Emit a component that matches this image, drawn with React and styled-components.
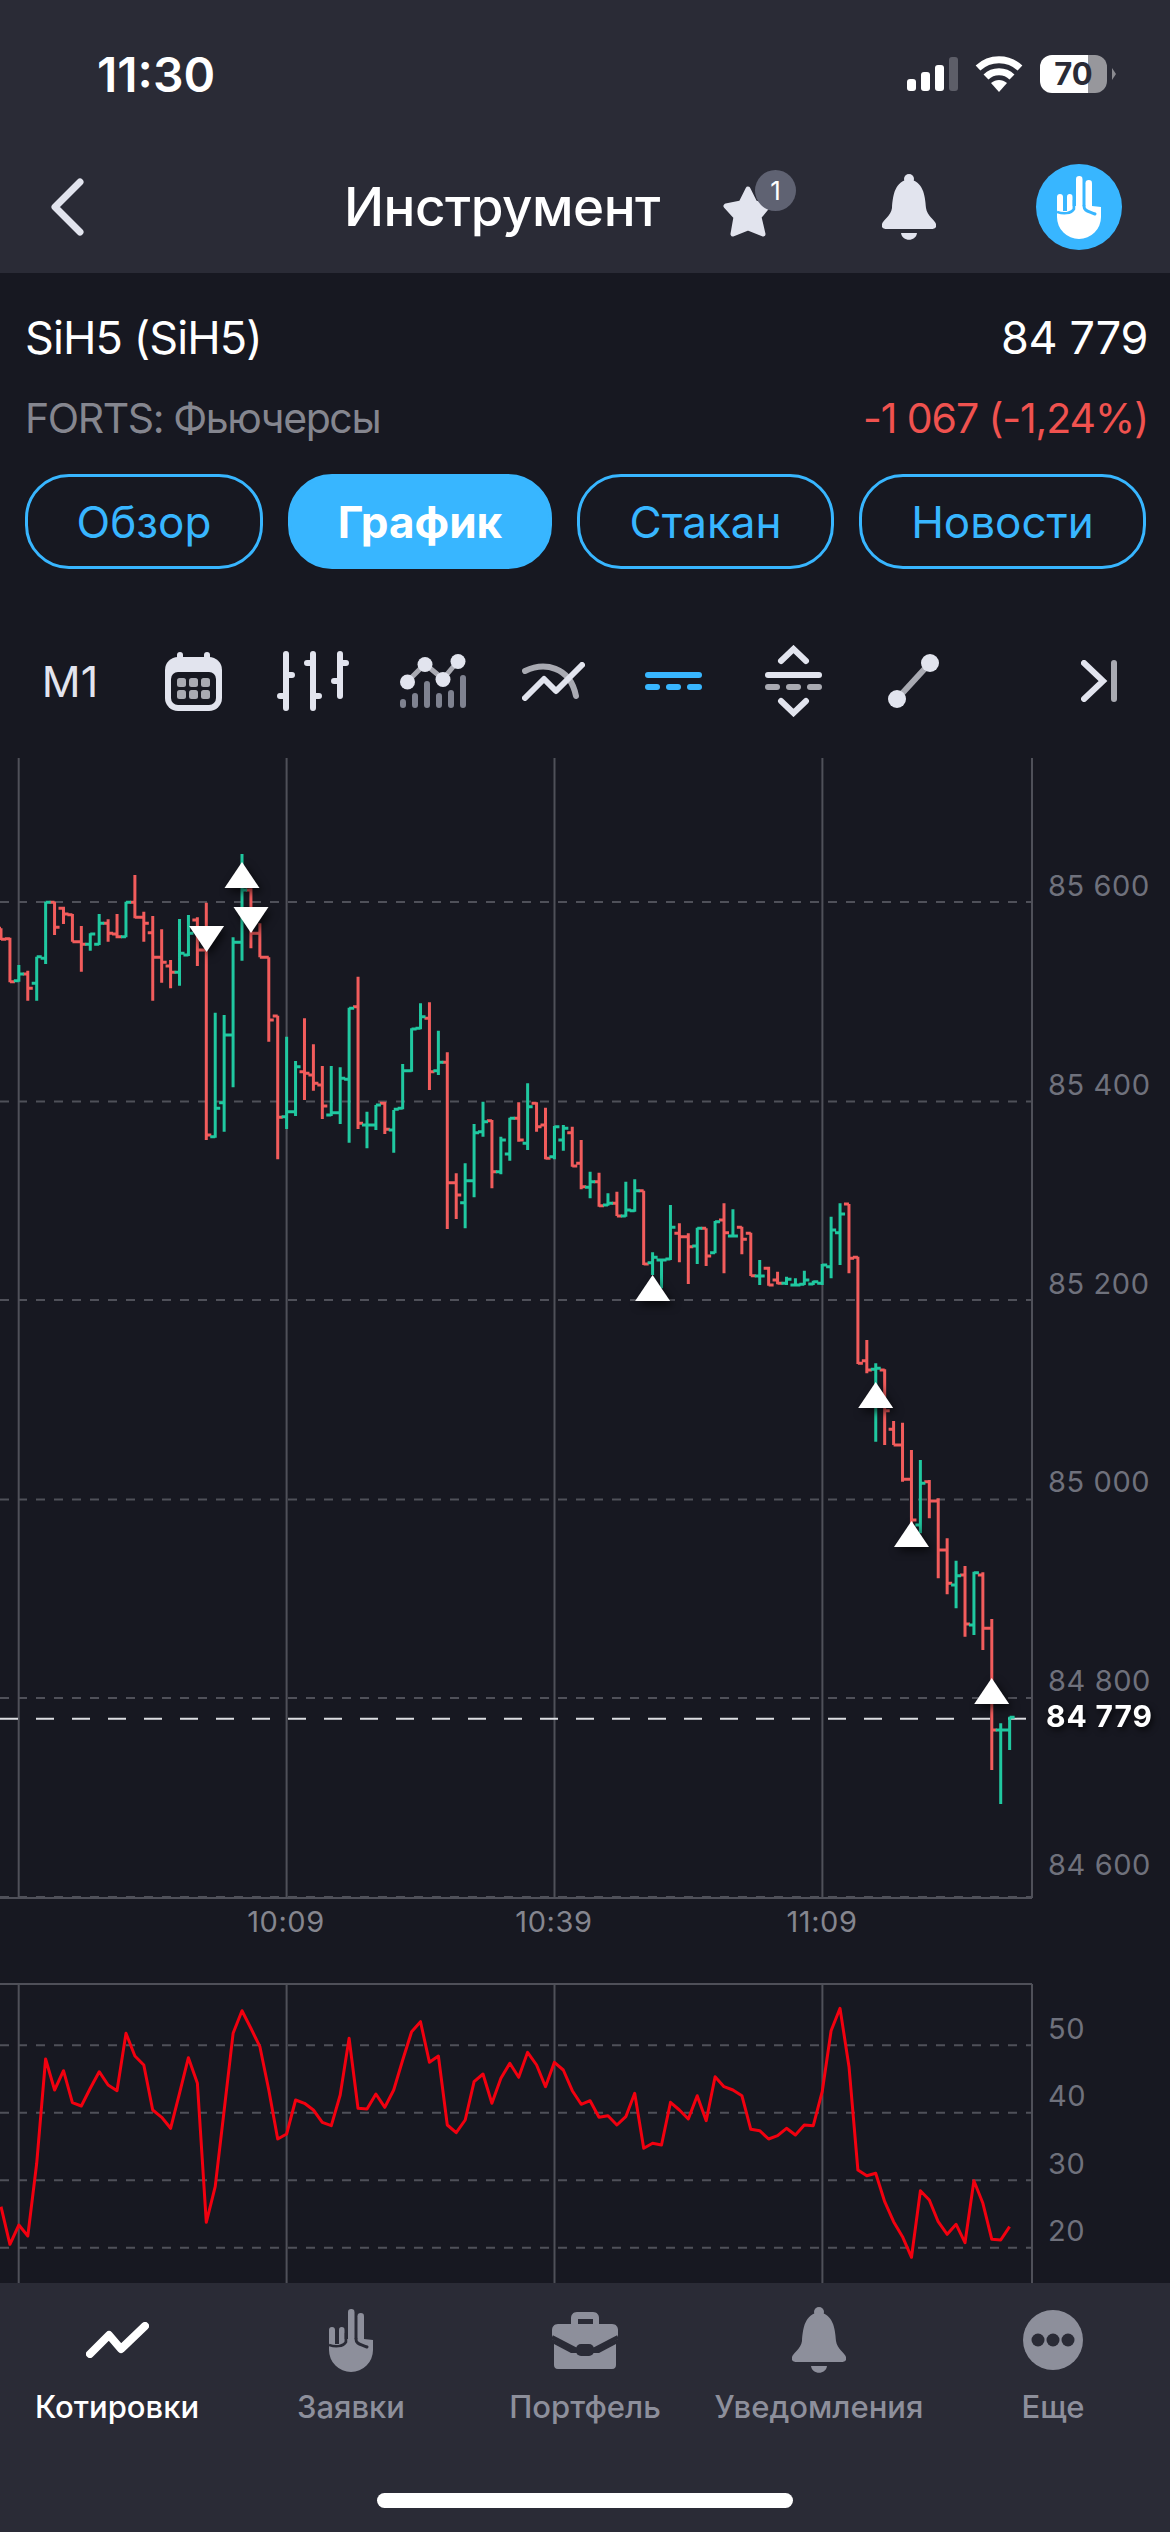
import styled, { createGlobalStyle } from "styled-components";

const colors = {
  header: "#2a2b36",
  body: "#171821",
  blue: "#38b6ff",
  icon: "#e2e4ee",
  iconDim: "#a9aab2",
  tabIcon: "#8d8f9b",
  red: "#f25c5c",
  green: "#20c8a0",
  grid: "#4f5059",
  axis: "#6f717c",
};

const GlobalStyle = createGlobalStyle`
  html, body {
    margin: 0;
    padding: 0;
    background: ${colors.body};
  }
  body {
    font-family: Inter, "Noto Sans", "Liberation Sans", sans-serif;
    color: white;
  }
`;

const Page = styled.div`
  width: 1170px;
  height: 2532px;
  display: flex;
  flex-direction: column;
  overflow: hidden;
`;

const Header = styled.header`
  height: 273px;
  flex: none;
  background: ${colors.header};
`;

const StatusBar = styled.div`
  height: 148px;
  padding: 0 54px 0 97px;
  box-sizing: border-box;
  display: flex;
  justify-content: space-between;
  align-items: center;
`;

const Time = styled.div`
  font-size: 48px;
  font-weight: 600;
`;

const StatusIcons = styled.div`
  display: flex;
  align-items: center;
  gap: 17px;
`;

const BatteryWrap = styled.div`
  display: flex;
  align-items: center;
  gap: 5px;
`;

const Battery = styled.div`
  width: 67px;
  height: 38px;
  border-radius: 12px;
  background: linear-gradient(to right, #fff 72%, #97979c 72%);
  color: ${colors.header};
  font-size: 31px;
  font-weight: 700;
  line-height: 38px;
  text-align: center;
`;

const BatteryCap = styled.div`
  width: 4px;
  height: 12px;
  background: #8a8a90;
  clip-path: polygon(0 0, 100% 50%, 0 100%);
`;

const NavBar = styled.div`
  height: 118px;
  padding: 0 48px 0 51px;
  display: flex;
  align-items: center;
`;

const Title = styled.h1`
  flex: 1;
  margin: 0 0 0 260px;
  font-size: 53px;
  font-weight: 500;
  letter-spacing: -0.5px;
  white-space: nowrap;
`;

const StarWrap = styled.div`
  position: relative;
  width: 50px;
  height: 53px;
  margin-top: 8px;
`;

const Badge = styled.div`
  position: absolute;
  left: 34px;
  top: -15px;
  width: 41px;
  height: 41px;
  border-radius: 50%;
  background: #5f6272;
  font-size: 26px;
  line-height: 41px;
  text-align: center;
`;

const NavBell = styled.div`
  display: flex;
  margin-left: 111px;
`;

const Avatar = styled.div`
  width: 86px;
  height: 86px;
  margin-left: 100px;
  border-radius: 50%;
  background: ${colors.blue};
  display: flex;
  align-items: center;
  justify-content: center;
`;

const Main = styled.main`
  flex: 1;
  min-height: 0;
  display: flex;
  flex-direction: column;
`;

const QuoteRow = styled.div`
  display: flex;
  justify-content: space-between;
  height: 50px;
  line-height: 50px;
  margin: ${(p) => p.$top}px 22px 0 25px;
  font-size: ${(p) => p.$size}px;
`;

const SymbolName = styled.span`
  letter-spacing: -0.9px;
`;

const LastQuote = styled.span`
  letter-spacing: -0.3px;
`;

const Muted = styled.span`
  color: #85868f;
  letter-spacing: -1.4px;
`;

const Loss = styled.span`
  color: #f0524f;
  letter-spacing: -1.1px;
`;

const Tabs = styled.div`
  display: grid;
  grid-template-columns: 238px 264px 257px 287px;
  gap: 25px;
  margin: 31px 25px 0;
`;

const Tab = styled.button`
  height: 95px;
  padding: 0;
  box-sizing: border-box;
  border: 3px solid ${colors.blue};
  border-radius: 44px;
  background: ${(p) => (p.$active ? colors.blue : "transparent")};
  color: ${(p) => (p.$active ? "#fff" : colors.blue)};
  font-family: inherit;
  font-size: 44px;
  font-weight: ${(p) => (p.$active ? 700 : 400)};
`;

const Toolbar = styled.div`
  height: 189px;
  padding: 35px 53px 0 13px;
  box-sizing: border-box;
  display: flex;
  align-items: center;
`;

const ToolCell = styled.div`
  width: 120px;
  display: flex;
  justify-content: center;
  align-items: center;
`;

const Period = styled.div`
  margin-right: 6px;
  font-size: 43px;
  color: ${colors.icon};
`;

const Collapse = styled.div`
  display: flex;
  margin-left: auto;
`;

const Chart = styled.svg`
  display: block;
  flex: none;
`;

const PriceText = styled.text`
  font-family: Inter, "Liberation Sans", sans-serif;
  font-size: 29px;
  letter-spacing: 0.6px;
  fill: ${colors.axis};
`;

const LastPrice = styled(PriceText)`
  font-size: 30px;
  font-weight: 700;
  letter-spacing: 0.9px;
  fill: #fff;
  filter: drop-shadow(2px 3px 3px rgba(0, 0, 0, 0.7));
`;

const TimeText = styled(PriceText)`
  fill: #85868f;
  text-anchor: middle;
`;

const Marker = styled.polygon`
  fill: #fff;
  filter: drop-shadow(3px 4px 4px rgba(0, 0, 0, 0.65));
`;

const Footer = styled.footer`
  height: 249px;
  flex: none;
  background: ${colors.header};
  position: relative;
  display: grid;
  grid-template-columns: repeat(5, 234px);
  align-content: start;
  padding-top: 24px;
  box-sizing: border-box;
`;

const TabItem = styled.div`
  display: flex;
  flex-direction: column;
  align-items: center;
  color: ${(p) => (p.$active ? "#fff" : colors.tabIcon)};
`;

const TabIcon = styled.div`
  height: 66px;
  display: flex;
  align-items: center;
`;

const TabLabel = styled.div`
  margin-top: 16px;
  font-size: 31px;
  font-weight: 500;
  line-height: 36px;
  white-space: nowrap;
`;

const HomeBar = styled.div`
  position: absolute;
  left: 377px;
  bottom: 24px;
  width: 416px;
  height: 15px;
  border-radius: 8px;
  background: #fff;
`;

// y readings taken per section of the chart: [green, high, low, open, close]
const section = (top, rows) =>
  rows.map(([g, h, l, o, c]) => ({
    up: g === 1,
    h: top + h / 3,
    l: top + l / 3,
    o: top + o / 3,
    c: top + c / 3,
  }));

const bars = [
  ...section(840, [
    [0, 265, 300, 265, 298], [0, 293, 427, 296, 425], [1, 375, 425, 422, 402], [0, 392, 482, 402, 445],
    [1, 350, 482, 430, 350], [1, 185, 372, 355, 187], [0, 185, 285, 187, 262], [0, 200, 252, 205, 222],
    [0, 222, 305, 224, 305], [0, 258, 395, 305, 313], [1, 280, 332, 313, 282], [1, 222, 315, 313, 250],
    [0, 238, 305, 250, 280], [0, 222, 295, 282, 290], [1, 185, 292, 290, 187], [0, 105, 235, 187, 232],
    [0, 215, 305, 232, 250], [0, 228, 482, 278, 352], [0, 268, 428, 352, 367], [0, 360, 445, 378, 397],
    [1, 237, 437, 397, 340], [1, 225, 348, 345, 280], [0, 232, 378, 240, 330], [0, 188, 900, 330, 885],
    [1, 518, 893, 890, 805], [1, 525, 875, 788, 585], [1, 292, 742, 585, 307], [1, 42, 362, 307, 150],
    [0, 145, 325, 150, 280], [0, 250, 352, 280, 352], [0, 352, 605, 352, 540], [0, 527, 958, 528, 832],
    [1, 590, 867, 830, 815], [1, 663, 828, 815, 680], [0, 535, 780, 695, 700], [0, 613, 752, 705, 730],
    [0, 678, 837, 735, 798], [1, 678, 828, 825, 818], [1, 682, 852, 818, 715], [1, 503, 908, 718, 505],
    [0, 410, 867, 500, 850], [1, 815, 925, 855, 855], [1, 795, 870, 855, 795], [0, 785, 882, 790, 868],
    [1, 810, 938, 870, 808], [1, 672, 808, 805, 692], [1, 565, 695, 692, 567], [1, 490, 568, 565, 530],
    [0, 487, 750, 535, 695], [1, 572, 705, 692, 667], [0, 637, 1167, 667, 1028], [0, 1000, 1137, 1028, 1065],
    [1, 970, 1165, 1088, 1022], [1, 852, 1072, 1022, 878], [1, 785, 890, 875, 845], [0, 840, 1045, 842, 995],
    [1, 890, 1003, 995, 900], [1, 833, 962, 942, 835], [0, 787, 905, 835, 900], [1, 730, 930, 910, 800],
    [0, 787, 875, 790, 860], [0, 803, 958, 855, 955], [1, 858, 958, 950, 860], [1, 855, 932, 900, 865],
    [0, 860, 980, 878, 978],
  ]),
  ...section(1140, [
    [0, 0, 148, 70, 140], [1, 95, 175, 142, 125], [0, 98, 200, 125, 197], [1, 160, 197, 195, 190],
    [0, 155, 228, 190, 228], [1, 125, 230, 228, 210], [1, 118, 215, 212, 152], [0, 152, 375, 152, 372],
    [1, 337, 405, 368, 352], [1, 358, 445, 360, 360], [1, 195, 360, 357, 262], [0, 250, 367, 280, 290],
    [0, 280, 432, 290, 320], [1, 263, 372, 318, 265], [0, 265, 378, 265, 348], [1, 243, 340, 338, 245],
    [0, 190, 400, 240, 278], [1, 208, 290, 288, 288], [0, 260, 343, 262, 298], [0, 278, 408, 280, 407],
    [1, 360, 435, 408, 408], [0, 380, 437, 385, 435], [0, 395, 433, 420, 430], [1, 410, 435, 430, 418],
    [1, 415, 437, 435, 435], [1, 392, 435, 433, 420], [1, 422, 435, 432, 425], [1, 372, 435, 430, 375],
    [1, 230, 415, 380, 270], [1, 190, 375, 278, 222], [0, 192, 400, 192, 355], [0, 350, 672, 352, 670],
    [0, 600, 700, 662, 690], [1, 670, 905, 688, 685], [0, 688, 915, 690, 812], [0, 843, 915, 868, 915],
    [0, 848, 1025, 915, 1018],
  ]),
  ...section(1500, [
    [0, -150, 80, -62, 60], [1, -120, 100, 75, -50], [0, -60, 55, -55, 3], [0, -5, 235, 3, 150],
    [0, 115, 283, 150, 250], [1, 182, 325, 255, 227], [0, 198, 410, 225, 372], [1, 215, 405, 375, 218],
    [0, 217, 450, 225, 385], [0, 357, 810, 385, 690], [1, 670, 912, 690, 690], [1, 650, 750, 690, 652],
  ]),
];

const barX = (i) => 1 + 8.926 * i;

const barPath = (up) =>
  bars
    .map((b, i) => ({ ...b, x: barX(i) }))
    .filter((b) => b.up === up)
    .map(
      (b) =>
        `M${b.x} ${b.h}V${b.l}M${b.x - 5} ${b.o}H${b.x}M${b.x} ${b.c}H${b.x + 5}`
    )
    .join("");

const rsiRaw = [
  740, 853, 795, 828, 610, 297, 390, 332, 428, 438, 385, 335, 375, 392, 220, 288, 315, 450, 472, 505,
  400, 293, 370, 787, 680, 450, 220, 152, 205, 260, 390, 537, 522, 420, 430, 450, 487, 497, 405, 235,
  445, 447, 402, 442, 390, 300, 215, 185, 307, 288, 495, 518, 480, 365, 342, 430, 355, 310, 352, 277,
  315, 380, 307, 330, 392, 433, 422, 472, 467, 495, 470, 400, 565, 550, 555, 427, 450, 477, 407, 482,
  350, 380, 390, 407, 508, 512, 537, 527, 505, 525, 495, 497, 395, 212, 145, 320, 630, 647, 640, 725,
  785, 830, 892, 692, 720, 785, 823, 793, 848, 662, 730, 838, 840, 800,
];

const rsiPoints = rsiRaw
  .map((z, i) => `${barX(i).toFixed(1)},${(1960 + z / 3).toFixed(1)}`)
  .join(" ");

const priceGrid = [902, 1101.5, 1300, 1499.5, 1698, 1897];
const priceLabels = [
  ["85 600", 896],
  ["85 400", 1095],
  ["85 200", 1294],
  ["85 000", 1492],
  ["84 800", 1691],
  ["84 600", 1875],
];
const rsiGrid = [2045.3, 2112.7, 2180.3, 2247.7];
const rsiLabels = [
  ["50", 2039],
  ["40", 2106],
  ["30", 2174],
  ["20", 2241],
];
const timeLines = [18.7, 286.6, 554.5, 822.4];
const timeLabels = [
  ["10:09", 286],
  ["10:39", 554],
  ["11:09", 822],
];

const upMarkers = [
  [242, 862],
  [652.6, 1275],
  [875.7, 1382],
  [911.5, 1521],
  [991.7, 1678],
];
const downMarkers = [
  [206.6, 926],
  [251, 907],
];

function PriceChart() {
  return (
    <Chart width="1170" height="1525" viewBox="0 758 1170 1525">
      <g stroke={colors.grid} strokeWidth="2">
        <path d="M0 1898H1032M0 1984H1032" fill="none" />
        {[...timeLines, 1032].map((x) => (
          <path key={x} d={`M${x} 758V1898M${x} 1984V2283`} />
        ))}
      </g>
      <g stroke={colors.grid} strokeWidth="2" strokeDasharray="9 9">
        {[...priceGrid, ...rsiGrid].map((y) => (
          <path key={y} d={`M0 ${y}H1032`} />
        ))}
      </g>
      <path
        d="M0 1718.7H1026"
        stroke="#dcdde2"
        strokeWidth="2"
        strokeDasharray="18 18"
      />
      <path d={barPath(false)} stroke={colors.red} strokeWidth="3" fill="none" />
      <path d={barPath(true)} stroke={colors.green} strokeWidth="3" fill="none" />
      {upMarkers.map(([x, y]) => (
        <Marker key={x} points={`${x},${y} ${x + 17.5},${y + 26} ${x - 17.5},${y + 26}`} />
      ))}
      {downMarkers.map(([x, y]) => (
        <Marker key={x} points={`${x - 17.5},${y} ${x + 17.5},${y} ${x},${y + 26}`} />
      ))}
      <polyline
        points={rsiPoints}
        fill="none"
        stroke="#f2000f"
        strokeWidth="3"
        strokeLinejoin="round"
      />
      {priceLabels.map(([label, y]) => (
        <PriceText key={label} x="1048" y={y}>
          {label}
        </PriceText>
      ))}
      <LastPrice x="1046" y="1727">
        84 779
      </LastPrice>
      {timeLabels.map(([label, x]) => (
        <TimeText key={label} x={x} y="1932">
          {label}
        </TimeText>
      ))}
      {rsiLabels.map(([label, y]) => (
        <PriceText key={label} x="1048" y={y}>
          {label}
        </PriceText>
      ))}
    </Chart>
  );
}

function BellIcon({ color }) {
  return (
    <svg width="54" height="66" viewBox="0 0 54 66" fill={color}>
      <circle cx="27" cy="5" r="5" />
      <path d="M27 5C13 8 11 20 10 34C9 42 1 46 0 50C-1 54 2 55 5 55H49C52 55 55 54 54 50C53 46 45 42 44 34C43 20 41 8 27 5Z" />
      <path d="M19 59H35C34 68 20 68 19 59Z" />
    </svg>
  );
}

function HandIcon({ color, cut }) {
  return (
    <svg width="44" height="63" viewBox="0 0 44 63" fill={color}>
      <rect x="19" y="0" width="6.5" height="34" rx="3.2" />
      <rect x="28.5" y="4" width="6.5" height="30" rx="3.2" />
      <rect x="0" y="18" width="6" height="20" rx="3" />
      <rect x="10" y="18" width="5.5" height="20" rx="2.7" />
      <path d="M0 35H15.5V30H35L44 31V41A22 22 0 0 1 0 41Z" />
      <path
        d="M27 30C27 35 31 35 38 38"
        stroke={cut}
        strokeWidth="3"
        strokeLinecap="round"
        fill="none"
      />
      <path
        d="M0 36C6 38 14 38 17 33V24"
        stroke={cut}
        strokeWidth="2.5"
        fill="none"
      />
    </svg>
  );
}

function Toolbox() {
  const dim = colors.iconDim;
  const main = colors.icon;
  return (
    <Toolbar>
      <ToolCell>
        <Period>M1</Period>
      </ToolCell>
      <ToolCell>
        <svg width="57" height="59" viewBox="0 0 57 59">
          <rect x="12" y="0" width="6" height="10" rx="3" fill={main} />
          <rect x="39" y="0" width="6" height="10" rx="3" fill={main} />
          <rect x="0" y="5" width="57" height="54" rx="13" fill={main} />
          <rect x="6" y="20" width="45" height="33" rx="7" fill={colors.body} />
          {[12, 24, 36].map((x) =>
            [26, 38].map((y) => (
              <rect key={`${x}${y}`} x={x} y={y} width="9" height="9" rx="2.5" fill={dim} />
            ))
          )}
        </svg>
      </ToolCell>
      <ToolCell>
        <svg width="72" height="60" viewBox="0 0 72 60" stroke={main} strokeWidth="6" strokeLinecap="round">
          <path d="M9 3V57M9 24H15M9 45H3" />
          <path d="M36 3V57M36 12H30M36 45H42" />
          <path d="M63 3V45M63 12H69M63 30H57" />
        </svg>
      </ToolCell>
      <ToolCell>
        <svg width="66" height="54" viewBox="0 0 66 54">
          <path d="M3 48V51M15 42V51M27 30V51M39 42V51M51 39V51M63 24V51" stroke="#7f8290" strokeWidth="6" strokeLinecap="round" />
          <path d="M7 28L25 10L43 25L58 7" stroke={dim} strokeWidth="5" fill="none" />
          <circle cx="7.5" cy="28" r="7.5" fill={main} />
          <circle cx="25" cy="10.5" r="7.5" fill={main} />
          <circle cx="43" cy="25.5" r="7.5" fill={main} />
          <circle cx="58" cy="7.5" r="7.5" fill={main} />
        </svg>
      </ToolCell>
      <ToolCell>
        <svg width="63" height="39" viewBox="0 0 63 39" fill="none" strokeWidth="6" strokeLinecap="round" strokeLinejoin="round">
          <path d="M3 9C22 0 48 4 54 34" stroke={dim} />
          <path d="M3 36L22 17L34 29L60 3" stroke={main} />
        </svg>
      </ToolCell>
      <ToolCell>
        <svg width="57" height="18" viewBox="0 0 57 18" fill={colors.blue}>
          <rect x="0" y="0" width="57" height="6" rx="3" />
          <rect x="0" y="12" width="15" height="6" rx="3" />
          <rect x="21" y="12" width="15" height="6" rx="3" />
          <rect x="42" y="12" width="15" height="6" rx="3" />
        </svg>
      </ToolCell>
      <ToolCell>
        <svg width="57" height="72" viewBox="0 0 57 72">
          <path d="M16 16L28.5 4L41 16M16 56L28.5 68L41 56" fill="none" stroke={main} strokeWidth="6" strokeLinecap="round" />
          <rect x="0" y="27" width="57" height="6" rx="3" fill={main} />
          <rect x="0" y="39" width="15" height="6" rx="3" fill={dim} />
          <rect x="21" y="39" width="15" height="6" rx="3" fill={dim} />
          <rect x="42" y="39" width="15" height="6" rx="3" fill={dim} />
        </svg>
      </ToolCell>
      <ToolCell>
        <svg width="51" height="54" viewBox="0 0 51 54">
          <path d="M9 45L42 9" stroke={dim} strokeWidth="6" />
          <circle cx="42" cy="9" r="9" fill={main} />
          <circle cx="9" cy="45" r="9" fill={main} />
        </svg>
      </ToolCell>
      <Collapse>
        <svg width="36" height="42" viewBox="0 0 36 42" fill="none" strokeWidth="6" strokeLinecap="round">
          <path d="M3 3L22 21L3 39" stroke={main} />
          <path d="M33 3V39" stroke={dim} />
        </svg>
      </Collapse>
    </Toolbar>
  );
}

export default function App() {
  const tabIcon = colors.tabIcon;
  return (
    <Page>
      <GlobalStyle />
      <Header>
        <StatusBar>
          <Time>11:30</Time>
          <StatusIcons>
            <svg width="51" height="34" viewBox="0 0 51 34">
              <rect x="0" y="22" width="9" height="12" rx="3" fill="#fff" />
              <rect x="14" y="15" width="9" height="19" rx="3" fill="#fff" />
              <rect x="28" y="8" width="9" height="26" rx="3" fill="#fff" />
              <rect x="42" y="0" width="9" height="34" rx="3" fill="#5d5e68" />
            </svg>
            <svg width="48" height="36" viewBox="0 0 48 36" fill="none" stroke="#fff" strokeWidth="7">
              <path d="M3 12C15 1 33 1 45 12" />
              <path d="M11 21C18 14 30 14 37 21" />
              <path d="M16 27L24 36L32 27C27 23 21 23 16 27Z" fill="#fff" stroke="none" />
            </svg>
            <BatteryWrap>
              <Battery>70</Battery>
              <BatteryCap />
            </BatteryWrap>
          </StatusIcons>
        </StatusBar>
        <NavBar>
          <svg width="33" height="58" viewBox="0 0 33 58" fill="none" stroke={colors.icon} strokeWidth="7" strokeLinecap="round" strokeLinejoin="round">
            <path d="M29 4L4 29L29 54" />
          </svg>
          <Title>Инструмент</Title>
          <StarWrap>
            <svg width="50" height="53" viewBox="0 0 50 53" fill={colors.icon} stroke={colors.icon} strokeWidth="5" strokeLinejoin="round">
              <polygon points="27,4 34,18 47,21 38,32 42,49 27,43 12,49 15,32 5,21 20,18" />
            </svg>
            <Badge>1</Badge>
          </StarWrap>
          <NavBell>
            <BellIcon color={colors.icon} />
          </NavBell>
          <Avatar>
            <HandIcon color="#fff" cut={colors.blue} />
          </Avatar>
        </NavBar>
      </Header>
      <Main>
        <QuoteRow $top={40} $size={45}>
          <SymbolName>SiH5 (SiH5)</SymbolName>
          <LastQuote>84 779</LastQuote>
        </QuoteRow>
        <QuoteRow $top={30} $size={41}>
          <Muted>FORTS: Фьючерсы</Muted>
          <Loss>-1 067 (-1,24%)</Loss>
        </QuoteRow>
        <Tabs>
          <Tab>Обзор</Tab>
          <Tab $active>График</Tab>
          <Tab>Стакан</Tab>
          <Tab>Новости</Tab>
        </Tabs>
        <Toolbox />
        <PriceChart />
      </Main>
      <Footer>
        <TabItem $active>
          <TabIcon>
            <svg width="63" height="36" viewBox="0 0 63 36" fill="none" stroke="#fff" strokeWidth="8" strokeLinecap="round" strokeLinejoin="round">
              <path d="M4 32L23 13L35 27L59 4" />
            </svg>
          </TabIcon>
          <TabLabel>Котировки</TabLabel>
        </TabItem>
        <TabItem>
          <TabIcon>
            <HandIcon color={tabIcon} cut={colors.header} />
          </TabIcon>
          <TabLabel>Заявки</TabLabel>
        </TabItem>
        <TabItem>
          <TabIcon>
            <svg width="66" height="57" viewBox="0 0 66 57" fill={tabIcon}>
              <path fillRule="evenodd" d="M25 0H41C45 0 47 3 47 6V12H41V7H26V12H19V6C19 3 21 0 25 0Z" />
              <path d="M6 12H60C64 12 66 15 66 18V27L47 36H19L0 27V18C0 15 2 12 6 12Z" />
              <path d="M2 32L19 41H47L64 32V53C64 55 63 57 60 57H6C3 57 2 55 2 53Z" />
              <path d="M0 25L25 38M66 25L41 38" stroke={colors.header} strokeWidth="4" />
              <rect x="24" y="32" width="18" height="12" rx="5" fill={colors.header} />
            </svg>
          </TabIcon>
          <TabLabel>Портфель</TabLabel>
        </TabItem>
        <TabItem>
          <TabIcon>
            <BellIcon color={tabIcon} />
          </TabIcon>
          <TabLabel>Уведомления</TabLabel>
        </TabItem>
        <TabItem>
          <TabIcon>
            <svg width="60" height="60" viewBox="0 0 60 60">
              <circle cx="30" cy="30" r="30" fill={tabIcon} />
              <circle cx="15" cy="30" r="6.5" fill={colors.header} />
              <circle cx="30" cy="30" r="6.5" fill={colors.header} />
              <circle cx="45" cy="30" r="6.5" fill={colors.header} />
            </svg>
          </TabIcon>
          <TabLabel>Еще</TabLabel>
        </TabItem>
        <HomeBar />
      </Footer>
    </Page>
  );
}
